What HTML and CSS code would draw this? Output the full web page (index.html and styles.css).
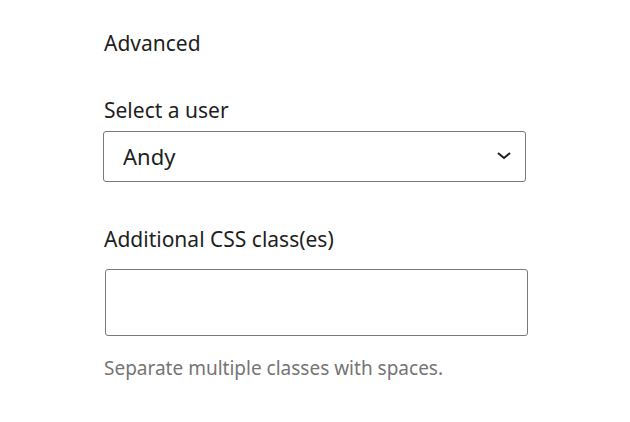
FILE: index.html
```html
<!DOCTYPE html>
<html lang="en">
<head>
<meta charset="utf-8">
<title>Advanced</title>
<link rel="stylesheet" href="styles.css">
</head>
<body>
<div class="panel">
  <h2 class="panel-title">Advanced</h2>
  <div class="field field-select">
    <label class="field-label">Select a user</label>
    <div class="select">
      <span class="select-value">Andy</span>
      <svg class="chevron" width="14" height="8" viewBox="0 0 14 8" aria-hidden="true">
        <polyline points="1,1 7,6 13,1" fill="none" stroke="#1e1e1e" stroke-width="2"/>
      </svg>
    </div>
  </div>
  <div class="field field-text">
    <label class="field-label">Additional CSS class(es)</label>
    <input class="text-input" type="text">
    <p class="help">Separate multiple classes with spaces.</p>
  </div>
</div>
</body>
</html>
```

FILE: styles.css
```css
html, body {
  margin: 0;
  padding: 0;
  background: #ffffff;
}

body {
  font-family: "Noto Sans", "Open Sans", sans-serif;
  color: #1e1e1e;
}

.panel {
  padding: 29px 0 0 104px;
  width: 422px;
  display: flex;
  flex-direction: column;
}

.panel-title {
  margin: 0;
  font-size: 21px;
  font-weight: 400;
  line-height: 29.4px;
}

.field {
  display: flex;
  flex-direction: column;
}

.field-select {
  margin-top: 37.6px;
}

.field-label {
  font-size: 21px;
  line-height: 29.4px;
}

.select {
  margin-top: 5.5px;
  margin-left: -1px;
  box-sizing: border-box;
  height: 51px;
  width: 423px;
  border: 1px solid #7a7a7a;
  border-radius: 3px;
  display: flex;
  align-items: center;
  justify-content: space-between;
  padding: 0 14px 0 19px;
}

.select-value {
  font-size: 22px;
}

.chevron {
  display: block;
}

.field-text {
  margin-top: 43.2px;
}

.text-input {
  margin: 14.5px 0 0 1px;
  box-sizing: border-box;
  width: 423px;
  height: 67px;
  border: 1px solid #7a7a7a;
  border-radius: 3px;
  background: #ffffff;
  font-family: inherit;
  font-size: 22px;
  padding: 0 12px;
  outline: none;
}

.help {
  margin: 19.3px 0 0 0;
  font-size: 19px;
  line-height: 26.6px;
  color: #757575;
}
```
